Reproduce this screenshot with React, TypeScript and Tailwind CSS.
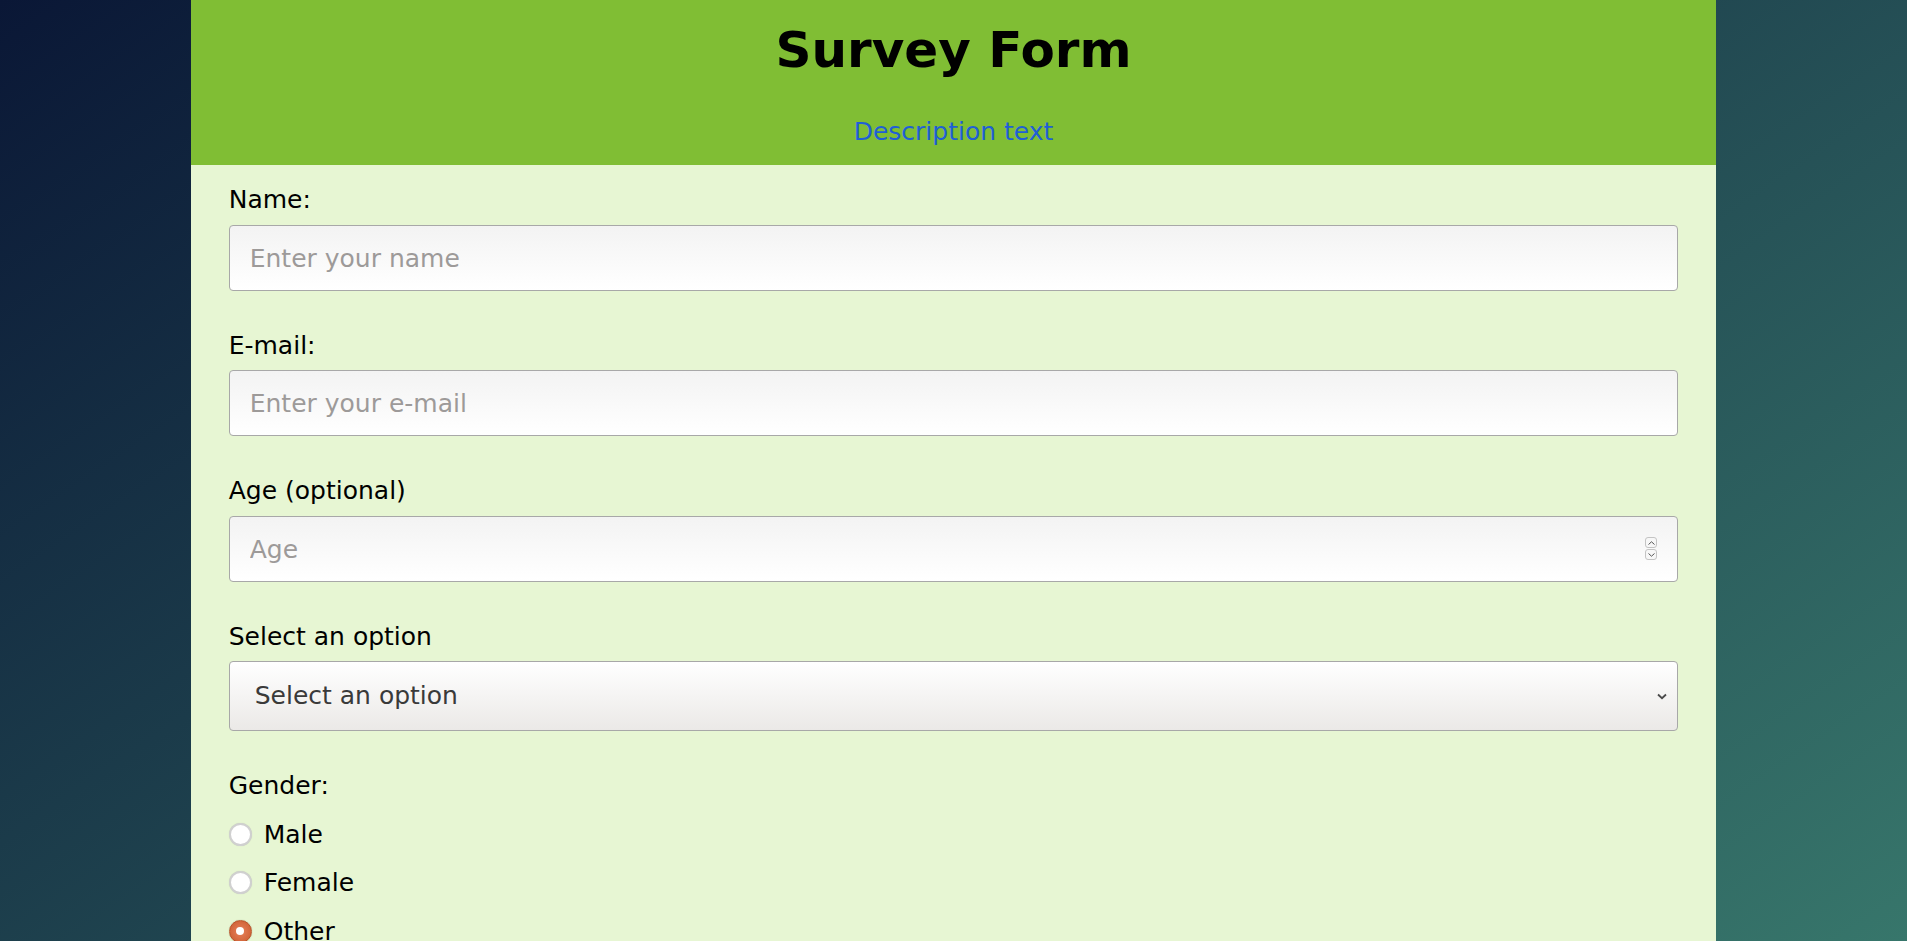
import React from "react";

function Radio({ label, checked }: { label: string; checked?: boolean }) {
  return (
    <label className="flex items-center gap-[12px] leading-[29px]">
      {checked ? (
        <span className="flex h-[23px] w-[23px] items-center justify-center rounded-full border border-[#b9552a] bg-radial from-[#e8825a] to-[#c9592c] shadow-[0_0_1px_rgba(0,0,0,0.3)]">
          <span className="h-[8px] w-[8px] rounded-full bg-white" />
        </span>
      ) : (
        <span className="h-[23px] w-[23px] rounded-full border-2 border-[#d0d0d0] bg-white shadow-[0_0_1px_rgba(0,0,0,0.15)]" />
      )}
      <span>{label}</span>
    </label>
  );
}

export default function App() {
  return (
    <div
      className="h-screen w-full overflow-hidden bg-[linear-gradient(146deg,#0a1736_0%,#37766b_100%)] text-black"
      style={{ fontFamily: '"DejaVu Sans", "Liberation Sans", sans-serif' }}
    >
      <div className="mx-auto w-4/5 bg-[#e7f6d3] pb-[40px] text-[25px]">
        <header className="flex flex-col items-center bg-[#80be34] pt-[21px] pb-[18.5px]">
          <h1 className="text-[50px] font-bold leading-[58px]">Survey Form</h1>
          <p className="mt-[38px] leading-[29px] text-[#1f5fd6]">Description text</p>
        </header>

        <form className="flex flex-col px-[38px] pt-[20.5px]">
          <div className="flex flex-col">
            <label className="leading-[29px]">Name:</label>
            <input
              type="text"
              placeholder="Enter your name"
              className="mt-[10.5px] h-[66px] w-full rounded-[4px] border border-[#a8a8a8] bg-linear-to-b from-[#f3f3f3] to-white pl-[20px] pt-[1px] outline-none placeholder:text-[#9d9a99]"
            />
          </div>

          <div className="mt-[40px] flex flex-col">
            <label className="leading-[29px]">E-mail:</label>
            <input
              type="text"
              placeholder="Enter your e-mail"
              className="mt-[10.5px] h-[66px] w-full rounded-[4px] border border-[#a8a8a8] bg-linear-to-b from-[#f3f3f3] to-white pl-[20px] pt-[1px] outline-none placeholder:text-[#9d9a99]"
            />
          </div>

          <div className="mt-[40px] flex flex-col">
            <label className="leading-[29px]">Age (optional)</label>
            <div className="mt-[10.5px] flex h-[66px] w-full items-center rounded-[4px] border border-[#a8a8a8] bg-linear-to-b from-[#f3f3f3] to-white pr-[20px]">
              <input
                type="text"
                placeholder="Age"
                className="h-full min-w-0 flex-1 bg-transparent pl-[20px] pt-[1px] outline-none placeholder:text-[#9d9a99]"
              />
              <div className="flex flex-col gap-[1px]">
                <span className="flex h-[11px] w-[12px] items-center justify-center rounded-[3px] border border-[#c4c4c4] bg-[#f7f7f7]">
                  <svg width="7" height="4" viewBox="0 0 7 4">
                    <path d="M0.5 3.5 L3.5 0.8 L6.5 3.5" fill="none" stroke="#555" strokeWidth="1" />
                  </svg>
                </span>
                <span className="flex h-[11px] w-[12px] items-center justify-center rounded-[3px] border border-[#c4c4c4] bg-[#f7f7f7]">
                  <svg width="7" height="4" viewBox="0 0 7 4">
                    <path d="M0.5 0.5 L3.5 3.2 L6.5 0.5" fill="none" stroke="#555" strokeWidth="1" />
                  </svg>
                </span>
              </div>
            </div>
          </div>

          <div className="mt-[40px] flex flex-col">
            <label className="leading-[29px]">Select an option</label>
            <div className="mt-[10px] flex h-[70px] w-full items-center justify-between rounded-[4px] border border-[#a8a8a8] bg-linear-to-b from-white to-[#ebe9e7] pl-[25px] pr-[10px] pt-[1px] text-[#3a3a3a]">
              <span>Select an option</span>
              <svg width="10" height="7" viewBox="0 0 10 7">
                <path d="M1 1.5 L5 5.2 L9 1.5" fill="none" stroke="#4a4a4a" strokeWidth="1.8" />
              </svg>
            </div>
          </div>

          <div className="mt-[40px] flex flex-col">
            <span className="leading-[29px]">Gender:</span>
            <div className="mt-[20px] flex flex-col gap-[19.5px]">
              <Radio label="Male" />
              <Radio label="Female" />
              <Radio label="Other" checked />
            </div>
          </div>
        </form>
      </div>
    </div>
  );
}
